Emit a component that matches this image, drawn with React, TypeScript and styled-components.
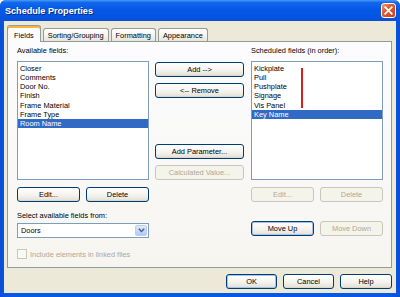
import styled, { createGlobalStyle } from 'styled-components'

const GlobalStyle = createGlobalStyle`
  html, body {
    margin: 0;
    padding: 0;
    background: #ffffff;
  }
  body {
    font-family: 'Liberation Sans', Arial, sans-serif;
    font-size: 7.4px;
    color: #000000;
  }
  * {
    box-sizing: border-box;
  }
`

const availableFields = [
  'Closer',
  'Comments',
  'Door No.',
  'Finish',
  'Frame Material',
  'Frame Type',
  'Room Name',
]

const scheduledFields = [
  'Kickplate',
  'Pull',
  'Pushplate',
  'Signage',
  'Vis Panel',
  'Key Name',
]

export default function App() {
  return (
    <>
      <GlobalStyle />
      <Window>
        <TitleBar>
          <Title>Schedule Properties</Title>
          <CloseButton>
            <svg width="9" height="9" viewBox="0 0 9 9">
              <path
                d="M1.2 1.2 L7.8 7.8 M7.8 1.2 L1.2 7.8"
                stroke="#ffffff"
                strokeWidth="1.7"
                strokeLinecap="square"
              />
            </svg>
          </CloseButton>
        </TitleBar>

        <Body>
          <TabStrip>
            <Tab $active>Fields</Tab>
            <Tab>Sorting/Grouping</Tab>
            <Tab>Formatting</Tab>
            <Tab>Appearance</Tab>
          </TabStrip>

          <Panel>
            <Column>
              <Label>Available fields:</Label>
              <ListBox>
                {availableFields.map((f) => (
                  <ListItem key={f} $selected={f === 'Room Name'}>
                    {f}
                  </ListItem>
                ))}
              </ListBox>
              <ButtonPair>
                <Button>Edit...</Button>
                <Button>Delete</Button>
              </ButtonPair>
              <Label $top={8}>Select available fields from:</Label>
              <Combo>
                <ComboText>Doors</ComboText>
                <ComboArrow>
                  <svg width="7" height="5" viewBox="0 0 7 5">
                    <path
                      d="M0.8 0.8 L3.5 3.5 L6.2 0.8"
                      stroke="#4d6185"
                      strokeWidth="1.5"
                      fill="none"
                    />
                  </svg>
                </ComboArrow>
              </Combo>
              <CheckRow>
                <CheckBox />
                <span>Include elements in linked files</span>
              </CheckRow>
            </Column>

            <MiddleColumn>
              <Button>Add --&gt;</Button>
              <Button $top={6}>&lt;-- Remove</Button>
              <Button $top={46}>Add Parameter...</Button>
              <Button $top={6} disabled>
                Calculated Value...
              </Button>
            </MiddleColumn>

            <Column>
              <Label>Scheduled fields (in order):</Label>
              <ListBox>
                {scheduledFields.map((f) => (
                  <ListItem key={f} $selected={f === 'Key Name'}>
                    {f}
                  </ListItem>
                ))}
                <RedMark />
              </ListBox>
              <ButtonPair>
                <Button disabled>Edit...</Button>
                <Button disabled>Delete</Button>
              </ButtonPair>
              <ButtonPair $top={19}>
                <Button $default>Move Up</Button>
                <Button disabled>Move Down</Button>
              </ButtonPair>
            </Column>
          </Panel>

          <DialogButtons>
            <Button $default $w={51}>
              OK
            </Button>
            <Button $w={51}>Cancel</Button>
            <Button $w={52}>Help</Button>
          </DialogButtons>
        </Body>
      </Window>
    </>
  )
}

const Window = styled.div`
  width: 400px;
  height: 297px;
  display: flex;
  flex-direction: column;
  background: linear-gradient(90deg, #0a4fd6 0%, #0758e4 2%, #0758e4 98%, #0a4fd6 100%);
  border-radius: 6px 6px 0 0;
  overflow: hidden;
`

const TitleBar = styled.div`
  height: 21px;
  flex: none;
  display: flex;
  align-items: center;
  justify-content: space-between;
  padding: 0 4px 0 5px;
  background: linear-gradient(
    180deg,
    #4a9bf7 0%,
    #1268ec 12%,
    #0558e6 45%,
    #0454e2 85%,
    #0a4fd6 100%
  );
`

const Title = styled.div`
  color: #ffffff;
  font-weight: bold;
  font-size: 9.1px;
  text-shadow: 1px 1px 0 #0a2a80;
  letter-spacing: 0;
`

const CloseButton = styled.div`
  width: 15px;
  height: 15px;
  border: 1px solid #ffffff;
  border-radius: 3px;
  display: flex;
  align-items: center;
  justify-content: center;
  background: linear-gradient(135deg, #f0997a 0%, #e05a33 40%, #c8401a 100%);
`

const Body = styled.div`
  flex: 1;
  margin: 0 4px 4px 4px;
  background: #ece9d8;
  padding: 4px 4px 0 3px;
  display: flex;
  flex-direction: column;
`

const TabStrip = styled.div`
  height: 16px;
  display: flex;
  align-items: flex-end;
  position: relative;
  z-index: 1;
`

const Tab = styled.div<{ $active?: boolean }>`
  height: ${(p) => (p.$active ? '17px' : '13px')};
  margin-bottom: ${(p) => (p.$active ? '-1px' : '0')};
  margin-left: ${(p) => (p.$active ? '0' : '1px')};
  padding: ${(p) => (p.$active ? '2px 6px 0' : '0 4px')};
  display: flex;
  align-items: center;
  border: 1px solid #919b9c;
  border-bottom: none;
  border-radius: 3px 3px 0 0;
  white-space: nowrap;
  background: ${(p) =>
    p.$active ? '#fcfcfe' : 'linear-gradient(180deg, #ffffff 0%, #f3f2ed 60%, #e6e4da 100%)'};
  box-shadow: ${(p) => (p.$active ? 'inset 0 2px 0 #f9b43a' : 'none')};
  & + & {
    margin-left: 2px;
  }
`

const Panel = styled.div`
  height: 227px;
  flex: none;
  border: 1px solid #919b9c;
  background: linear-gradient(180deg, #fcfcfe 0%, #f6f5f0 100%);
  padding: 3px 8px 0 9px;
  display: flex;
  gap: 6px;
`

const Column = styled.div`
  width: 132px;
  display: flex;
  flex-direction: column;
`

const MiddleColumn = styled.div`
  width: 89px;
  display: flex;
  flex-direction: column;
  padding-top: 17px;
  margin-right: 1px;
`

const Label = styled.div<{ $top?: number }>`
  height: 11px;
  line-height: 11px;
  margin-top: ${(p) => p.$top ?? 0}px;
  margin-bottom: ${(p) => (p.$top ? 2 : 5)}px;
  white-space: nowrap;
`

const ListBox = styled.div`
  position: relative;
  height: 119px;
  background: #ffffff;
  border: 1px solid #7f9db9;
  padding-top: 2px;
`

const ListItem = styled.div<{ $selected?: boolean }>`
  height: 9.17px;
  line-height: 9.17px;
  padding-left: 2px;
  white-space: nowrap;
  background: ${(p) => (p.$selected ? '#316ac5' : 'transparent')};
  color: ${(p) => (p.$selected ? '#ffffff' : '#000000')};
`

const RedMark = styled.div`
  position: absolute;
  left: 49px;
  top: 6px;
  width: 2px;
  height: 40px;
  background: #e01b1b;
`

const ButtonPair = styled.div<{ $top?: number }>`
  display: flex;
  gap: 6px;
  margin-top: ${(p) => p.$top ?? 7}px;
  & > * {
    flex: 1;
  }
`

const Button = styled.button<{ $top?: number; $w?: number; $default?: boolean }>`
  height: 15px;
  width: ${(p) => (p.$w ? `${p.$w}px` : 'auto')};
  margin: ${(p) => p.$top ?? 0}px 0 0 0;
  padding: 0;
  font-family: 'Liberation Sans', Arial, sans-serif;
  font-size: 7.4px;
  color: #000000;
  border: 1px solid #003c74;
  border-radius: 3px;
  background: linear-gradient(180deg, #ffffff 0%, #f4f3ee 55%, #e6e3da 90%, #d6d0c5 100%);
  box-shadow: ${(p) => (p.$default ? 'inset 0 0 0 1px #a9c2ec' : 'none')};
  white-space: nowrap;
  &:disabled {
    color: #aca899;
    border-color: #c9c7ba;
    background: #f5f4ea;
    box-shadow: none;
  }
`

const Combo = styled.div`
  height: 15px;
  display: flex;
  align-items: center;
  background: #ffffff;
  border: 1px solid #7f9db9;
  padding: 1px;
`

const ComboText = styled.div`
  flex: 1;
  padding-left: 2px;
`

const ComboArrow = styled.div`
  width: 12px;
  height: 100%;
  display: flex;
  align-items: center;
  justify-content: center;
  border-radius: 2px;
  border: 1px solid #b9cdf6;
  background: linear-gradient(180deg, #dde8fd 0%, #c5d6fb 60%, #b4c8f5 100%);
`

const CheckRow = styled.div`
  margin-top: 11px;
  display: flex;
  align-items: center;
  gap: 3px;
  color: #aca899;
  white-space: nowrap;
`

const CheckBox = styled.div`
  width: 10px;
  height: 10px;
  border: 1px solid #cac8bb;
  background: #f8f8f4;
`

const DialogButtons = styled.div`
  display: flex;
  justify-content: flex-end;
  gap: 6px;
  margin-top: 6px;
`
